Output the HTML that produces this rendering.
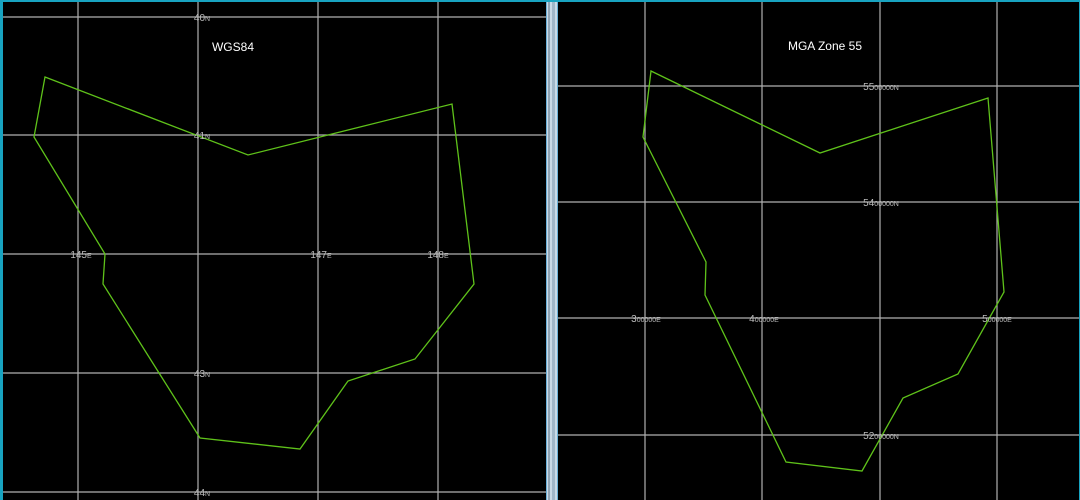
<!DOCTYPE html>
<html><head><style>
html,body{margin:0;padding:0;width:1080px;height:500px;overflow:hidden;background:#000}
svg{display:block}
text{font-family:"Liberation Sans",sans-serif}
</style></head><body>
<svg width="1080" height="500" viewBox="0 0 1080 500">
<rect width="1080" height="500" fill="#000"/>
<g stroke="#b0b0b0" stroke-width="1.2">
<line x1="78" y1="0" x2="78" y2="500"/><line x1="198" y1="0" x2="198" y2="500"/>
<line x1="318" y1="0" x2="318" y2="500"/><line x1="438" y1="0" x2="438" y2="500"/>
<line x1="0" y1="17" x2="546" y2="17"/><line x1="0" y1="135" x2="546" y2="135"/>
<line x1="0" y1="254" x2="546" y2="254"/><line x1="0" y1="373" x2="546" y2="373"/>
<line x1="0" y1="492" x2="546" y2="492"/>
<line x1="645" y1="0" x2="645" y2="500"/><line x1="762" y1="0" x2="762" y2="500"/>
<line x1="880" y1="0" x2="880" y2="500"/><line x1="997" y1="0" x2="997" y2="500"/>
<line x1="558" y1="86" x2="1080" y2="86"/><line x1="558" y1="202" x2="1080" y2="202"/>
<line x1="558" y1="318" x2="1080" y2="318"/><line x1="558" y1="435" x2="1080" y2="435"/>
</g>
<g fill="none" stroke="#5fc21a" stroke-width="1.3">
<polygon points="45,77 248,155 452,104 474,284 415,359 348,381 300,449 200,438 103,284 105,254 34,137"/>
<polygon points="651,71 820,153 988,98 1004,292 958,374 903,398 862,471 786,462 705,295 706,262 643,137"/>
</g>
<g fill="#bbb" font-size="10" text-anchor="middle">
<text x="202" y="21">40<tspan font-size="7">N</tspan></text>
<text x="202" y="139">41<tspan font-size="7">N</tspan></text>
<text x="81" y="258">145<tspan font-size="7">E</tspan></text>
<text x="321" y="258">147<tspan font-size="7">E</tspan></text>
<text x="438" y="258">148<tspan font-size="7">E</tspan></text>
<text x="202" y="377">43<tspan font-size="7">N</tspan></text>
<text x="202" y="496">44<tspan font-size="7">N</tspan></text>
<text x="881" y="90">55<tspan font-size="7">00000N</tspan></text>
<text x="881" y="206">54<tspan font-size="7">00000N</tspan></text>
<text x="646" y="322">3<tspan font-size="7">00000E</tspan></text>
<text x="764" y="322">4<tspan font-size="7">00000E</tspan></text>
<text x="997" y="322">5<tspan font-size="7">00000E</tspan></text>
<text x="881" y="439">52<tspan font-size="7">00000N</tspan></text>
</g>
<g fill="#fff" font-size="12" text-anchor="middle">
<text x="233" y="51">WGS84</text>
<text x="825" y="50">MGA Zone 55</text>
</g>
<rect x="546" y="0" width="12" height="500" fill="#c9d9e6"/>
<rect x="548" y="0" width="2" height="500" fill="#8fa3b3"/>
<rect x="552" y="0" width="3" height="500" fill="#a0b6c8"/>
<rect x="546" y="0" width="1" height="500" fill="#6ab0d8"/>
<rect x="557" y="0" width="1" height="500" fill="#6ab0d8"/>
<rect x="0" y="0" width="1080" height="2" fill="#18a3c0"/>
<rect x="0" y="0" width="3" height="500" fill="#18a3c0"/>
<rect x="1079" y="0" width="1" height="500" fill="#18a3c0"/>
</svg>
</body></html>
